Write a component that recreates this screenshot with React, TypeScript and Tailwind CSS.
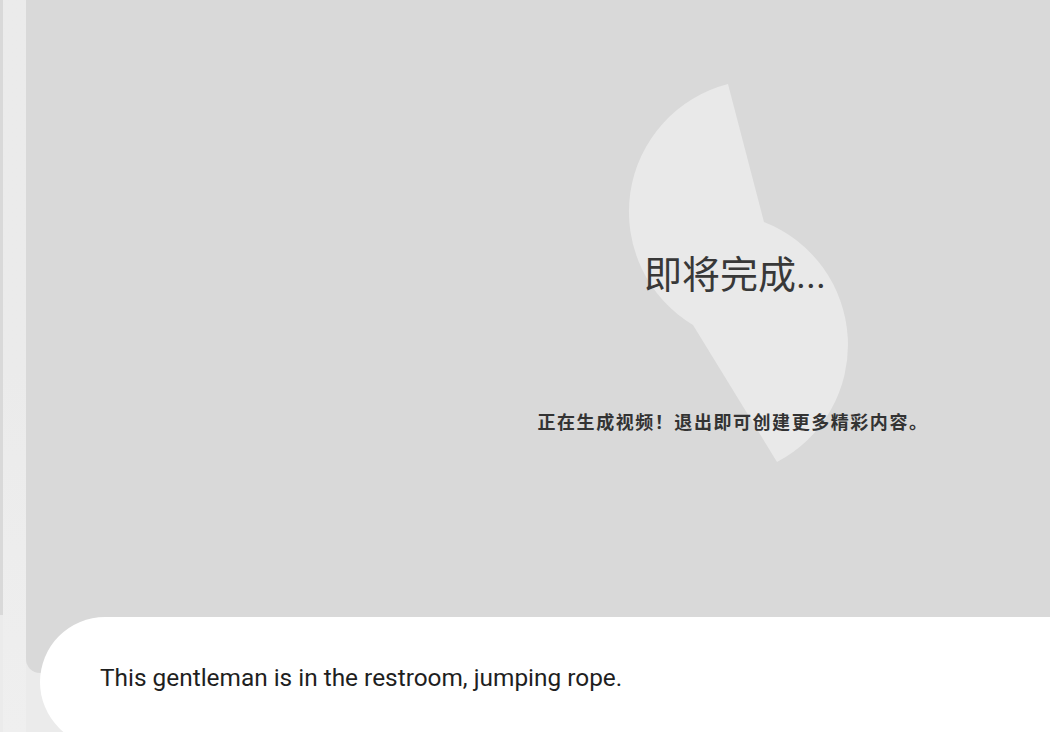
const SparkShape = () => (
  <svg
    className="pointer-events-none absolute left-0 top-0"
    width="1414"
    height="673"
    viewBox="0 0 1414 673"
    aria-hidden="true"
  >
    <path
      d="M702 84 L738 222 A132 132 0 0 1 751 462 L667 325 A132 132 0 0 1 702 84 Z"
      fill="#e9e9e9"
    />
  </svg>
);

export default function App() {
  return (
    <div className="flex h-[732px] w-full overflow-hidden bg-[#ebebeb] font-['Roboto','Noto_Sans_CJK_SC',sans-serif]">
      {/* left rail */}
      <div className="flex w-[26px] shrink-0">
        <div className="h-[615px] w-[3px] bg-[#d9d9d9]" />
        <div className="flex-1 bg-gradient-to-b from-[#ebebeb] via-[#ebebeb] to-[#efefef]" />
      </div>

      <div className="flex min-w-0 flex-1 flex-col">
        {/* preview panel */}
        <div className="relative h-[673px] w-[1414px] shrink-0 rounded-bl-[14px] bg-[#d9d9d9]">
          <SparkShape />
          <div className="relative flex flex-col items-center pt-[252px]">
            <h1 className="pl-[4px] text-[38px] font-normal leading-[46px] text-[#383838] font-['Roboto','Noto_Sans_CJK_SC',sans-serif]">
              即将完成...
            </h1>
            <p className="mt-[111px] text-[18px] font-bold leading-6 tracking-[1.55px] text-[#333333] font-['Noto_Sans_CJK_SC',sans-serif]">
              正在生成视频！退出即可创建更多精彩内容。
            </p>
          </div>
        </div>

        {/* prompt card */}
        <div className="relative z-10 -mt-[56px] ml-[14px] h-[130px] w-[1200px] shrink-0 rounded-l-[65px] bg-white pl-[60px] pt-[45px]">
          <p className="text-[24.4px] leading-8 text-[#1f1f1f]">
            This gentleman is in the restroom, jumping rope.
          </p>
        </div>
      </div>
    </div>
  );
}
